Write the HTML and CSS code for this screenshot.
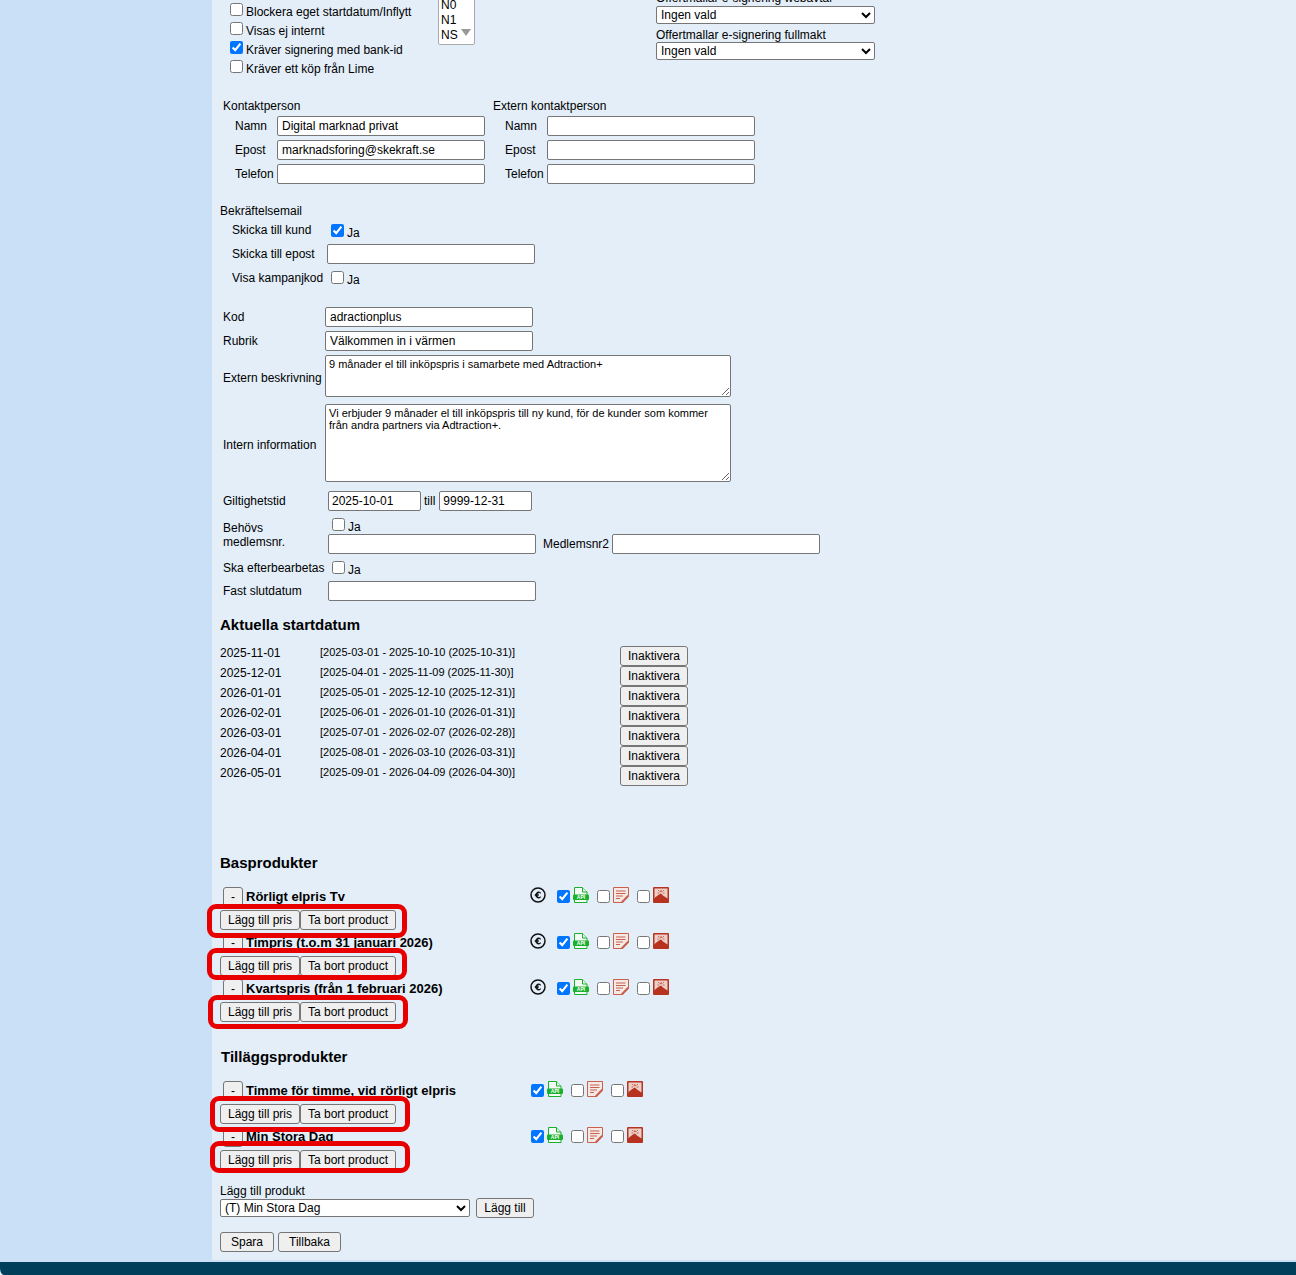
FILE: index.html
```html
<!DOCTYPE html>
<html lang="sv">
<head>
<meta charset="utf-8">
<title>Kampanj</title>
<link rel="stylesheet" href="styles.css">
</head>
<body>
<svg class="defs" width="0" height="0">
  <symbol id="i-euro" viewBox="0 0 16 16"><circle cx="8" cy="8" r="7" fill="none" stroke="#111" stroke-width="1.500"/><path d="M10.800 5.500A3.300 3.300 0 1 0 10.800 10.500V9A1.900 1.900 0 1 1 10.800 7Z" fill="#111"/><path d="M4.800 7h4v.8h-4zM4.800 8.300h4v.8h-4z" fill="#111"/></symbol>
  <symbol id="i-api" viewBox="0 0 16 16"><path d="M1.500.5H9.500L14 5V15.500H1.500Z" fill="#f4fbf5" stroke="#18b02c" stroke-width="1"/><path d="M9.500 .5V5H14" fill="#e8f7ea" stroke="#18b02c"/><rect x="0" y="7.500" width="16" height="5.500" rx="1" fill="#18b02c"/><text x="8" y="12" class="api">API</text></symbol>
  <symbol id="i-doc" viewBox="0 0 16 16"><path d="M.5.500H15.500V9L9.500 15.500H.5Z" fill="#f5e9e6" stroke="#c8604d"/><path d="M3 4H12.500M3 6.500H12.500M3 9H10M3 11.500H7" stroke="#c8604d" stroke-width="1.200"/><path d="M8.500 14.200L14.500 8L16 9.500L10 15.800L8.200 16Z" fill="#c8604d"/></symbol>
  <symbol id="i-img" viewBox="0 0 16 16"><rect width="16" height="16" rx="1" fill="#b8331f"/><rect x="1.500" y="1.500" width="13" height="10" fill="#eccfc7"/><path d="M1.500 11L4 9L6 7.500L8 6.500L10 8.500L14.500 11.500V14H1.500Z" fill="#b8331f"/><circle cx="8" cy="4.200" r="1" fill="#c9604e"/><path d="M5 3L6.500 4.500M11 3L9.500 4.500M4.500 6H6.300M11.500 6H9.700" stroke="#c9604e" stroke-width=".9"/></symbol>
</svg>
<div class="page">
  <aside class="side"></aside>
  <main class="main">
    <section class="top">
      <div class="checks">
        <label class="check"><input type="checkbox"><span>Blockera eget startdatum/Inflytt</span></label>
        <label class="check"><input type="checkbox"><span>Visas ej internt</span></label>
        <label class="check"><input type="checkbox" checked><span>Kräver signering med bank-id</span></label>
        <label class="check"><input type="checkbox"><span>Kräver ett köp från Lime</span></label>
      </div>
      <div class="listbox">
        <div>N0</div><div>N1</div><div>NS</div>
        <i class="tri"></i>
      </div>
      <div class="offers">
        <div class="offer-label">Offertmallar e-signering webavtal</div>
        <select class="offer-select"><option>Ingen vald</option></select>
        <div class="offer-label second">Offertmallar e-signering fullmakt</div>
        <select class="offer-select"><option>Ingen vald</option></select>
      </div>
    </section>

    <section class="contacts">
      <div class="contact">
        <div class="contact-title">Kontaktperson</div>
        <div class="contact-row"><span>Namn</span><input class="field" value="Digital marknad privat"></div>
        <div class="contact-row"><span>Epost</span><input class="field" value="marknadsforing@skekraft.se"></div>
        <div class="contact-row"><span>Telefon</span><input class="field"></div>
      </div>
      <div class="contact">
        <div class="contact-title">Extern kontaktperson</div>
        <div class="contact-row"><span>Namn</span><input class="field"></div>
        <div class="contact-row"><span>Epost</span><input class="field"></div>
        <div class="contact-row"><span>Telefon</span><input class="field"></div>
      </div>
    </section>

    <section class="confirm">
      <div class="confirm-title">Bekräftelsemail</div>
      <div class="confirm-row r1"><span>Skicka till kund</span><label class="ja"><input type="checkbox" checked><span>Ja</span></label></div>
      <div class="confirm-row r2"><span>Skicka till epost</span><input class="field"></div>
      <div class="confirm-row r3"><span>Visa kampanjkod</span><label class="ja"><input type="checkbox"><span>Ja</span></label></div>
    </section>

    <section class="campaign">
      <div class="c-row h24"><span>Kod</span><input class="field" value="adractionplus"></div>
      <div class="c-row h24"><span>Rubrik</span><input class="field" value="Välkommen in i värmen"></div>
      <div class="c-row ext"><span>Extern beskrivning</span><textarea class="area a-ext">9 månader el till inköpspris i samarbete med Adtraction+</textarea></div>
      <div class="c-row int"><span>Intern information</span><textarea class="area a-int">Vi erbjuder 9 månader el till inköpspris till ny kund, för de kunder som kommer från andra partners via Adtraction+.</textarea></div>
    </section>

    <section class="validity">
      <div class="v-row v-dates"><span class="v-label">Giltighetstid</span><input class="field date" value="2025-10-01"><span class="till">till</span><input class="field date" value="9999-12-31"></div>
      <div class="v-row v-member">
        <span class="v-label two">Behövs<br>medlemsnr.</span>
        <div class="member">
          <label class="ja"><input type="checkbox"><span>Ja</span></label>
          <div class="member-inputs"><input class="field"><span class="m2">Medlemsnr2</span><input class="field"></div>
        </div>
      </div>
      <div class="v-row v-post"><span class="v-label">Ska efterbearbetas</span><label class="ja"><input type="checkbox"><span>Ja</span></label></div>
      <div class="v-row v-end"><span class="v-label">Fast slutdatum</span><input class="field"></div>
    </section>

    <h2 class="heading h-start">Aktuella startdatum</h2>
    <section class="dates">
      <div class="d-row"><span>2025-11-01</span><small>[2025-03-01 - 2025-10-10 (2025-10-31)]</small><button class="btn inact">Inaktivera</button></div>
      <div class="d-row"><span>2025-12-01</span><small>[2025-04-01 - 2025-11-09 (2025-11-30)]</small><button class="btn inact">Inaktivera</button></div>
      <div class="d-row"><span>2026-01-01</span><small>[2025-05-01 - 2025-12-10 (2025-12-31)]</small><button class="btn inact">Inaktivera</button></div>
      <div class="d-row"><span>2026-02-01</span><small>[2025-06-01 - 2026-01-10 (2026-01-31)]</small><button class="btn inact">Inaktivera</button></div>
      <div class="d-row"><span>2026-03-01</span><small>[2025-07-01 - 2026-02-07 (2026-02-28)]</small><button class="btn inact">Inaktivera</button></div>
      <div class="d-row"><span>2026-04-01</span><small>[2025-08-01 - 2026-03-10 (2026-03-31)]</small><button class="btn inact">Inaktivera</button></div>
      <div class="d-row"><span>2026-05-01</span><small>[2025-09-01 - 2026-04-09 (2026-04-30)]</small><button class="btn inact">Inaktivera</button></div>
    </section>

    <h2 class="heading h-base">Basprodukter</h2>
    <section class="products">
      <div class="product">
        <div class="p-head"><button class="btn minus">-</button><b class="p-name">Rörligt elpris Tv</b>
          <div class="p-icons base"><svg class="ico euro"><use href="#i-euro"/></svg><input type="checkbox" class="ck first" checked><svg class="ico"><use href="#i-api"/></svg><input type="checkbox" class="ck"><svg class="ico"><use href="#i-doc"/></svg><input type="checkbox" class="ck"><svg class="ico"><use href="#i-img"/></svg></div></div>
        <div class="p-btns"><button class="btn add">Lägg till pris</button><button class="btn del">Ta bort product</button><i class="mark m-a"></i></div>
      </div>
      <div class="product">
        <div class="p-head"><button class="btn minus">-</button><b class="p-name">Timpris (t.o.m 31 januari 2026)</b>
          <div class="p-icons base"><svg class="ico euro"><use href="#i-euro"/></svg><input type="checkbox" class="ck first" checked><svg class="ico"><use href="#i-api"/></svg><input type="checkbox" class="ck"><svg class="ico"><use href="#i-doc"/></svg><input type="checkbox" class="ck"><svg class="ico"><use href="#i-img"/></svg></div></div>
        <div class="p-btns"><button class="btn add">Lägg till pris</button><button class="btn del">Ta bort product</button><i class="mark m-b"></i></div>
      </div>
      <div class="product">
        <div class="p-head"><button class="btn minus">-</button><b class="p-name">Kvartspris (från 1 februari 2026)</b>
          <div class="p-icons base"><svg class="ico euro"><use href="#i-euro"/></svg><input type="checkbox" class="ck first" checked><svg class="ico"><use href="#i-api"/></svg><input type="checkbox" class="ck"><svg class="ico"><use href="#i-doc"/></svg><input type="checkbox" class="ck"><svg class="ico"><use href="#i-img"/></svg></div></div>
        <div class="p-btns"><button class="btn add">Lägg till pris</button><button class="btn del">Ta bort product</button><i class="mark m-c"></i></div>
      </div>
    </section>

    <h2 class="heading h-add">Tilläggsprodukter</h2>
    <section class="products">
      <div class="product">
        <div class="p-head"><button class="btn minus">-</button><b class="p-name">Timme för timme, vid rörligt elpris</b>
          <div class="p-icons extra"><input type="checkbox" class="ck first" checked><svg class="ico"><use href="#i-api"/></svg><input type="checkbox" class="ck"><svg class="ico"><use href="#i-doc"/></svg><input type="checkbox" class="ck"><svg class="ico"><use href="#i-img"/></svg></div></div>
        <div class="p-btns"><button class="btn add">Lägg till pris</button><button class="btn del">Ta bort product</button><i class="mark m-d"></i></div>
      </div>
      <div class="product">
        <div class="p-head"><button class="btn minus">-</button><b class="p-name">Min Stora Dag</b>
          <div class="p-icons extra"><input type="checkbox" class="ck first" checked><svg class="ico"><use href="#i-api"/></svg><input type="checkbox" class="ck"><svg class="ico"><use href="#i-doc"/></svg><input type="checkbox" class="ck"><svg class="ico"><use href="#i-img"/></svg></div></div>
        <div class="p-btns"><button class="btn add">Lägg till pris</button><button class="btn del">Ta bort product</button><i class="mark m-e"></i></div>
      </div>
    </section>

    <section class="addprod">
      <div class="add-label">Lägg till produkt</div>
      <div class="add-row"><select class="add-select"><option>(T) Min Stora Dag</option></select><button class="btn add-btn">Lägg till</button></div>
    </section>
    <section class="actions">
      <button class="btn save">Spara</button><button class="btn back">Tillbaka</button>
    </section>
  </main>
</div>
<footer class="foot"></footer>
</body>
</html>
```
FILE: styles.css
```css
html, body { margin: 0; height: 1275px; overflow: hidden; }
body {
  display: flex; flex-direction: column;
  font: 12px/14px "Liberation Sans", Arial, sans-serif;
  color: #000;
  background: #e3eef8;
}
.defs { position: absolute; }
.page { display: flex; height: 1262px; overflow: hidden; background: #c9e0f7; flex: none; }
.side { width: 212px; flex: none; }
.main { flex: 1; min-width: 0; height: 1260px; background: #e3eef8; }
.foot { height: 13px; background: #003f5a; border-bottom-left-radius: 4px 7px; }

input, select, textarea, button { font-family: "Liberation Sans", Arial, sans-serif; font-size: 12px; box-sizing: border-box; }
input[type=checkbox] { margin: 0; width: 13px; height: 13px; flex: none; }
.field { width: 208px; height: 20px; padding: 1px 4px; border: 1px solid #767676; border-radius: 2px; background: #fff; color: #000; flex: none; }
.btn { height: 20px; padding: 0; border: 1px solid #767676; border-radius: 3px; background: #efefef; color: #000; flex: none; }

/* top */
.top { display: flex; height: 98px; padding-left: 18px; }
.checks { width: 208px; flex: none; }
.check { display: flex; height: 19px; align-items: center; }
.check span { margin-left: 3px; position: relative; top: 2px; }
.listbox { width: 37px; height: 60px; margin-top: -15px; box-sizing: border-box; border: 1px solid #aaa; border-radius: 2px; background: #fff; padding: 12px 0 0 2px; position: relative; flex: none; line-height: 15px; }
.listbox div { height: 15px; }
.tri { position: absolute; left: 22px; top: 43px; border: 5px solid transparent; border-top: 7px solid #999; border-bottom: 0; }
.offers { margin-left: 181px; margin-top: -16px; width: 219px; flex: none; }
.offer-label { height: 22px; line-height: 28px; }
.offer-label.second { height: 18px; line-height: 22px; }
.offer-select { display: block; width: 219px; height: 18px; padding: 0; border: 1px solid #767676; border-radius: 2px; background: #fff; }

/* contacts */
.contacts { display: flex; height: 106px; }
.contact { width: 270px; padding-left: 11px; box-sizing: border-box; flex: none; }
.contact-title { height: 18px; line-height: 14px; padding-top: 1px; box-sizing: border-box; }
.contact-row { display: flex; height: 24px; align-items: flex-start; padding-left: 12px; }
.contact-row span { width: 42px; line-height: 20px; flex: none; }

/* confirm */
.confirm { padding-left: 8px; height: 101px; box-sizing: border-box; }
.confirm-title { height: 14px; line-height: 14px; }
.confirm-row { display: flex; align-items: center; padding-left: 12px; }
.confirm-row > span:first-child { width: 95px; flex: none; }
.r1 { height: 24px; }
.r1 .ja { margin-top: 2px; }
.r2 { height: 24px; }
.r3 { height: 23px; }
.ja { display: flex; align-items: flex-start; margin-left: 4px; }
.ja span { margin-left: 3px; line-height: 14px; position: relative; top: 2px; }

/* campaign */
.campaign { padding-left: 11px; }
.c-row { display: flex; align-items: center; }
.c-row > span { width: 102px; flex: none; }
.h24 { height: 24px; }
.ext { height: 46px; }
.int { height: 78px; margin-top: 5px; }
.ext > span, .int > span { padding-top: 4px; }
.area { display: block; width: 406px; padding: 2px 3px; border: 1px solid #767676; border-radius: 2px; background: #fff; font-size: 11px; line-height: 12px; color: #000; resize: both; }
.a-ext { height: 42px; }
.a-int { height: 78px; }

/* validity */
.validity { padding-left: 11px; }
.v-row { display: flex; }
.v-label { width: 105px; flex: none; }
.v-dates { height: 20px; align-items: center; margin-top: 9px; }
.date { width: 93px; padding-left: 3px; }
.till { margin: 0 4px 0 3px; }
.v-member { height: 43px; padding-top: 7px; box-sizing: border-box; }
.two { padding-top: 3px; line-height: 14px; }
.member .ja { height: 16px; }
.member-inputs { display: flex; align-items: center; }
.m2 { margin: 0 3px 0 7px; }
.v-post { height: 27px; align-items: center; }
.v-end { height: 20px; align-items: center; }

/* headings */
.heading { margin: 0; font-size: 15px; line-height: 18px; font-weight: bold; padding-left: 8px; }
.h-start { margin-top: 15px; }
.h-base { margin-top: 68px; }
.h-add { margin-top: 23px; padding-left: 9px; }

/* dates */
.dates { margin-top: 12px; padding-left: 8px; }
.d-row { display: flex; height: 20px; align-items: flex-start; }
.d-row > span { width: 100px; line-height: 14px; flex: none; }
.d-row small { width: 300px; font-size: 11px; line-height: 12px; flex: none; }
.inact { width: 68px; }

/* products */
.products { margin-top: 15px; padding-left: 8px; }
.product { height: 46px; }
.p-head { display: flex; height: 23px; align-items: flex-start; position: relative; padding-left: 3px; }
.minus { width: 20px; height: 20px; }
.p-name { margin-left: 3px; font-size: 13px; line-height: 16px; padding-top: 2px; flex: none; }
.p-icons { position: absolute; top: 0; display: flex; align-items: flex-start; height: 16px; }
.p-icons.base { left: 310px; }
.p-icons.extra { left: 311px; }
.ico { width: 16px; height: 16px; flex: none; display: block; }
.euro { margin-right: 11px; }
.api { font: bold 5px "Liberation Sans", Arial, sans-serif; fill: #fff; text-anchor: middle; }
.ck { margin: 3px 3px 0 8px !important; }
.ck.first { margin-left: 0 !important; }
.p-btns { display: flex; position: relative; z-index: 1; height: 20px; }
.add { width: 80px; }
.del { width: 96px; }
.mark { position: absolute; z-index: 2; border: 5px solid #e80000; border-radius: 9px; box-sizing: border-box; }
.m-a { left: -13px; top: -6px; width: 200px; height: 34px; }
.m-b { left: -13px; top: -8px; width: 200px; height: 32px; }
.m-c { left: -12px; top: -7px; width: 200px; height: 34px; }
.m-d { left: -10px; top: -8px; width: 200px; height: 36px; }
.m-e { left: -10px; top: -9px; width: 200px; height: 32px; }

/* add */
.addprod { padding-left: 8px; margin-top: 11px; }
.add-label { height: 14px; line-height: 14px; }
.add-row { display: flex; align-items: center; }
.add-select { width: 250px; height: 18px; border: 1px solid #767676; border-radius: 2px; background: #fff; padding: 0; }
.add-btn { width: 58px; margin-left: 6px; }
.actions { display: flex; padding-left: 8px; margin-top: 14px; gap: 4px; }
.save { width: 54px; }
.back { width: 63px; }
```
